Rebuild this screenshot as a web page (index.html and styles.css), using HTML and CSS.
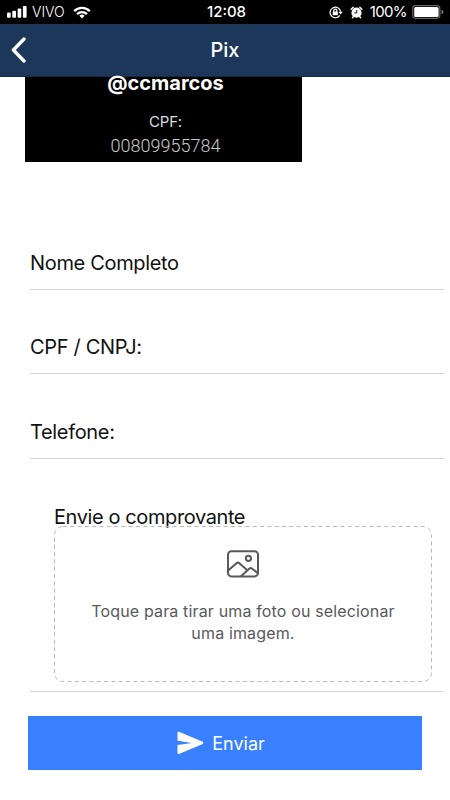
FILE: index.html
```html
<!DOCTYPE html>
<html lang="pt-BR">
<head>
    <meta charset="UTF-8">
    <meta name="viewport" content="width=device-width, initial-scale=1.0">
    <title>Pix</title>
    <link rel="stylesheet" href="styles.css">
</head>
<body>
 <div class="status-bar">
  <div class="status-left">
   <svg class="signal" width="20" height="12" viewBox="0 0 20 12" fill="#fff">
    <rect x="0" y="6.6" width="3.7" height="5.2" rx="1"/>
    <rect x="5.3" y="4.8" width="3.7" height="7" rx="1"/>
    <rect x="10.6" y="2.6" width="3.7" height="9.2" rx="1"/>
    <rect x="15.9" y="0" width="3.7" height="11.8" rx="1"/>
   </svg>
   <span class="carrier">VIVO</span>
   <svg class="wifi" width="18" height="13" viewBox="0 0 18 13" fill="none" stroke="#fff" stroke-width="2.3">
    <path d="M1.2 5.1a11 11 0 0 1 15.6 0"/>
    <path d="M4.1 8.1a6.9 6.9 0 0 1 9.8 0"/>
    <path d="M9 12.4l-2.6-2.6a3.7 3.7 0 0 1 5.2 0z" fill="#fff" stroke="none"/>
   </svg>
  </div>
  <span class="clock">12:08</span>
  <div class="status-right">
   <svg class="lock" width="14" height="13" viewBox="0 0 14 13" fill="none" stroke="#fff" stroke-width="1.2">
    <path d="M10.8 9.4A5.3 5.3 0 1 1 11.6 5.6"/>
    <path d="M9.4 5.7h4.4l-2.2 2.9z" fill="#fff" stroke="none"/>
    <rect x="3.7" y="5.6" width="5.2" height="3.7" rx=".5" fill="#fff" stroke="none"/>
    <path d="M4.8 6V4.6a1.5 1.5 0 0 1 3 0V6"/>
   </svg>
   <svg class="alarm" width="13" height="13" viewBox="0 0 13 13">
    <circle cx="6.5" cy="6.7" r="5.1" fill="#fff"/>
    <path d="M1.1 3.2L3.2 1.3M11.9 3.2L9.8 1.3M3.2 10.7l-.8 1M9.8 10.7l.8 1" stroke="#fff" stroke-width="1.4" stroke-linecap="round"/>
    <path d="M6.7 3.9v3H4.3" fill="none" stroke="#000" stroke-width=".9"/>
   </svg>
   <span class="percent">100%</span>
   <svg class="battery" width="32" height="14" viewBox="0 0 32 14">
    <rect x=".7" y=".7" width="27.2" height="12.6" rx="3.2" fill="none" stroke="#666" stroke-width="1.2"/>
    <rect x="2.2" y="2.1" width="24.4" height="9.9" rx="1.6" fill="#fff"/>
    <path d="M29.5 4.7c1.6.5 2 1.4 2 2.3s-.4 1.8-2 2.3z" fill="#777"/>
   </svg>
  </div>
 </div>

 <header class="header">
  <svg class="back" width="16" height="26" viewBox="0 0 16 26" fill="none" stroke="#fff" stroke-width="3.4" stroke-linecap="round" stroke-linejoin="round">
   <path d="M13 2L2.4 13L13 24"/>
  </svg>
  <h1 class="title">Pix</h1>
 </header>

 <main class="content">
  <div class="card">
   <strong class="user">@ccmarcos</strong>
   <span class="doc-label">CPF:</span>
   <span class="doc">00809955784</span>
  </div>

  <form class="form">
   <label class="field">Nome Completo</label>
   <label class="field">CPF / CNPJ:</label>
   <label class="field">Telefone:</label>

   <div class="upload">
    <span class="upload-label">Envie o comprovante</span>
    <div class="dropzone">
     <svg class="outline" width="378" height="156" fill="none" stroke="#b9b9b9">
      <rect x=".5" y=".5" width="377" height="155" rx="8.5" stroke-dasharray="4 3.3"/>
     </svg>
     <svg class="picture" width="32" height="28" viewBox="0 0 32 28" fill="none" stroke="#58595b" stroke-width="2" stroke-linejoin="round" stroke-linecap="round">
      <rect x="1" y="1.2" width="30" height="25.2" rx="3.4"/>
      <circle cx="21.4" cy="8.3" r="2.6"/>
      <path d="M1.2 20.5l8.2-7.2q1.5-1.4 3 0l7 6.3"/>
      <path d="M14.3 26l7.9-7.3q1.5-1.3 3 0l5.7 4.5"/>
     </svg>
     <p class="hint">Toque para tirar uma foto ou selecionar<br>uma imagem.</p>
    </div>
   </div>

   <button type="button" class="send">
    <svg class="plane" width="27" height="24" viewBox="0 0 27 24" fill="#fff">
     <path d="M.5 2.2C.3.9 1.2.4 2.5.9l22.7 9.6c1.5.7 1.5 2 0 2.7L2.5 22.8c-1.3.5-2.2 0-2-1.3V14l14.2-2.1L.5 9.8z"/>
    </svg>
    <span>Enviar</span>
   </button>
  </form>
 </main>
</body>
</html>
```
FILE: styles.css
```css
* {
    box-sizing: border-box;
}
body {
    margin: 0;
    height: 800px;
    overflow: hidden;
    background-color: #fff;
    color: #111;
    font-family: Inter, "Liberation Sans", sans-serif;
}

/* status bar */
.status-bar {
    display: grid;
    grid-template-columns: 1fr auto 1fr;
    align-items: center;
    height: 24px;
    padding: 0 6px 0 7px;
    background-color: #000;
    color: #fff;
    font-size: 14px;
    line-height: 24px;
}
.status-left,
.status-right {
    display: flex;
    align-items: center;
}
.status-right {
    justify-content: flex-end;
}
.carrier {
    margin-left: 5px;
    font-weight: 300;
}
.wifi {
    margin-left: 8px;
}
.clock {
    padding-left: 2px;
    font-size: 15px;
    font-weight: 500;
}
.alarm {
    margin-left: 7px;
}
.percent {
    margin: 0 5px 0 7px;
    font-size: 15px;
    letter-spacing: -0.6px;
}

/* header */
.header {
    display: grid;
    grid-template-columns: 1fr auto 1fr;
    align-items: center;
    height: 53px;
    padding: 0 11px;
    background-color: #1d375b;
    border-bottom: 1px solid #152943;
    color: #fff;
}
.title {
    margin: 0;
    font-size: 20px;
    font-weight: 500;
}

/* pix card, scrolled under the header */
.card {
    display: flex;
    flex-direction: column;
    align-items: center;
    width: 277px;
    height: 85px;
    margin-left: 25px;
    padding-left: 4px;
    background-color: #000;
    color: #ddd;
}
.user {
    margin-top: -6px;
    color: #fff;
    font-size: 20px;
    line-height: 24px;
}
.doc-label {
    margin-top: 18px;
    font-size: 15px;
    line-height: 18px;
    letter-spacing: -0.2px;
}
.doc {
    margin-top: 3px;
    color: #c8c8c8;
    font-family: Roboto, sans-serif;
    font-size: 18px;
    font-weight: 300;
    line-height: 24px;
}

/* form */
.form {
    padding: 43px 6px 0 30px;
}
.field {
    display: flex;
    align-items: flex-end;
    height: 84.6px;
    padding-bottom: 14px;
    border-bottom: 1px solid #d4d4d4;
    font-size: 20px;
    line-height: 24px;
    letter-spacing: -0.33px;
}
.upload {
    height: 233px;
    padding: 46px 12px 0 24px;
    border-bottom: 1px solid #d4d4d4;
}
.upload-label {
    display: block;
    height: 21px;
    font-size: 20px;
    line-height: 24px;
    letter-spacing: -0.4px;
}
.dropzone {
    position: relative;
    display: flex;
    flex-direction: column;
    align-items: center;
    height: 156px;
    padding-top: 24px;
}
.outline {
    position: absolute;
    top: 0;
    left: 0;
}
.hint {
    margin: 22px 0 0;
    color: #58595b;
    font-size: 16px;
    line-height: 22px;
    letter-spacing: 0.15px;
    text-align: center;
}
.send {
    display: flex;
    align-items: center;
    justify-content: center;
    width: 394px;
    height: 54px;
    margin: 24px 0 0 -2px;
    padding: 1px 8px 0 0;
    border: none;
    background-color: #3880ff;
    color: #fff;
    font-family: inherit;
    font-size: 18px;
}
.plane {
    margin-right: 8px;
    margin-top: -1px;
}
```
